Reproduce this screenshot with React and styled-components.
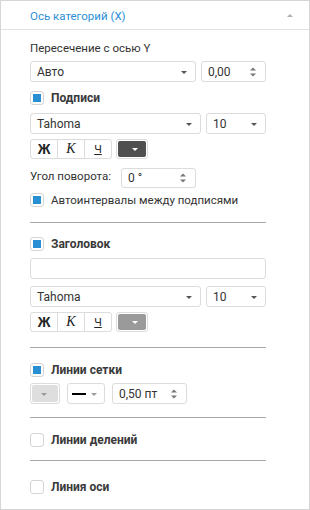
import React from 'react';
import styled, { createGlobalStyle } from 'styled-components';

const GlobalStyle = createGlobalStyle`
  html, body {
    margin: 0;
    padding: 0;
    background: #ffffff;
  }
  body {
    font-family: Roboto, "Noto Sans", sans-serif;
    font-size: 12px;
    color: #333333;
  }
`;

const Panel = styled.div`
  width: 308px;
  height: 508px;
  border: 1px solid #d6d6d6;
  background: #ffffff;
`;

const Header = styled.div`
  height: 28px;
  border-bottom: 1px solid #e2e2e2;
  display: flex;
  align-items: center;
  justify-content: space-between;
  padding: 0 16px 0 29px;
`;

const Title = styled.span`
  color: #2b8fd6;
  font-size: 11.5px;
  margin-top: 1px;
`;

const CollapseArrow = styled.span`
  width: 0;
  height: 0;
  border-left: 3px solid transparent;
  border-right: 3px solid transparent;
  border-bottom: 3px solid #b0b0b0;
`;

const Body = styled.div`
  padding: 0 43px 0 29px;
  display: flex;
  flex-direction: column;
`;

const Label = styled.div`
  margin-top: ${(p) => p.$mt || 0}px;
  line-height: 16px;
  font-size: 11.5px;
`;

const Row = styled.div`
  display: flex;
  align-items: ${(p) => p.$align || 'center'};
  gap: ${(p) => p.$gap ?? 5}px;
  margin-top: ${(p) => p.$mt || 0}px;
`;

const Box = styled.div`
  position: relative;
  box-sizing: border-box;
  width: ${(p) => (p.$w ? `${p.$w}px` : 'auto')};
  flex: ${(p) => (p.$w ? 'none' : '1')};
  height: ${(p) => p.$h || 21}px;
  border: 1px solid #dcdcdc;
  border-radius: 3px;
  background: #ffffff;
  display: flex;
  align-items: center;
  padding: 0 0 0 ${(p) => p.$pl ?? 6}px;
  font-size: 12px;
  color: #333333;
`;

const Caret = styled.span`
  position: absolute;
  right: ${(p) => p.$right ?? 8}px;
  top: 50%;
  margin-top: -1px;
  width: 0;
  height: 0;
  border-left: 3px solid transparent;
  border-right: 3px solid transparent;
  border-top: 3px solid ${(p) => p.$color || '#555555'};
`;

const Spinner = styled.span`
  position: absolute;
  right: ${(p) => p.$right ?? 9}px;
  top: 50%;
  transform: translateY(-50%);
  display: flex;
  flex-direction: column;
  gap: 3px;

  &::before,
  &::after {
    content: '';
    width: 0;
    height: 0;
    border-left: 3px solid transparent;
    border-right: 3px solid transparent;
  }
  &::before {
    border-bottom: 3px solid #777777;
  }
  &::after {
    border-top: 3px solid #777777;
  }
`;

const CheckRow = styled.label`
  display: flex;
  align-items: center;
  gap: 7px;
  height: 16px;
  margin-top: ${(p) => p.$mt || 0}px;
  font-size: ${(p) => (p.$bold ? 12 : 11.5)}px;
  font-weight: ${(p) => (p.$bold ? 700 : 400)};
  color: ${(p) => (p.$bold ? '#3a3a3a' : '#333333')};
`;

const CheckBox = styled.span`
  box-sizing: border-box;
  width: 14px;
  height: 14px;
  border: 1px solid #d4d4d4;
  border-radius: 3px;
  background: #ffffff;
  display: flex;
  align-items: center;
  justify-content: center;

  &::after {
    content: '';
    display: ${(p) => (p.$checked ? 'block' : 'none')};
    width: 8px;
    height: 8px;
    background: #2a8ed3;
  }
`;

const Divider = styled.div`
  height: 1px;
  background: #a8a8a8;
  margin-top: ${(p) => p.$mt || 0}px;
`;

const StyleGroup = styled.div`
  display: flex;
  height: 20px;
  box-sizing: border-box;
  border: 1px solid #dcdcdc;
  border-radius: 3px;
`;

const StyleButton = styled.span`
  width: 26px;
  display: flex;
  align-items: center;
  justify-content: center;
  border-left: ${(p) => (p.$first ? 'none' : '1px solid #dcdcdc')};
  color: #222222;
  font-size: 13px;
`;

const BoldGlyph = styled(StyleButton)`
  font-family: "Liberation Sans", Arial, sans-serif;
  font-weight: 900;
  font-size: 14px;
`;

const ItalicGlyph = styled(StyleButton)`
  font-family: "Liberation Serif", "Times New Roman", serif;
  font-style: italic;
  font-size: 14px;
`;

const UnderGlyph = styled(StyleButton)`
  font-size: 11px;
  text-decoration: underline;
`;

const ColorButton = styled.div`
  position: relative;
  box-sizing: border-box;
  width: ${(p) => p.$w || 32}px;
  height: ${(p) => p.$h || 20}px;
  border: 1px solid #dcdcdc;
  border-radius: 3px;
  padding: 1px;
`;

const ColorFill = styled.div`
  width: 100%;
  height: 100%;
  border-radius: 2px;
  background: ${(p) => p.$color};
`;

const LineSample = styled.span`
  width: 14px;
  height: 2px;
  background: #000000;
`;

const FontRow = ({ mt }) => (
  <Row $mt={mt}>
    <Box>
      Tahoma
      <Caret />
    </Box>
    <Box $w={60}>
      10
      <Caret />
    </Box>
  </Row>
);

const StyleRow = ({ mt, color, caret }) => (
  <Row $mt={mt} $gap={4}>
    <StyleGroup>
      <BoldGlyph $first>Ж</BoldGlyph>
      <ItalicGlyph>К</ItalicGlyph>
      <UnderGlyph>Ч</UnderGlyph>
    </StyleGroup>
    <ColorButton>
      <ColorFill $color={color} />
      <Caret $right={9} $color={caret} />
    </ColorButton>
  </Row>
);

export default function App() {
  return (
    <>
      <GlobalStyle />
      <Panel>
        <Header>
          <Title>Ось категорий (X)</Title>
          <CollapseArrow />
        </Header>
        <Body>
          <Label $mt={10}>Пересечение с осью Y</Label>
          <Row $mt={5}>
            <Box>
              Авто
              <Caret />
            </Box>
            <Box $w={65}>
              0,00
              <Spinner $right={9} />
            </Box>
          </Row>

          <CheckRow $mt={8} $bold>
            <CheckBox $checked />
            Подписи
          </CheckRow>
          <FontRow mt={7} />
          <StyleRow mt={5} color="#4f4f4f" caret="#ffffff" />
          <Row $mt={9} $gap={10} $align="flex-start">
            <Label>Угол поворота:</Label>
            <Box $w={75} $h={20}>
              0 °
              <Spinner $right={9} />
            </Box>
          </Row>
          <CheckRow $mt={4}>
            <CheckBox $checked />
            Автоинтервалы между подписями
          </CheckRow>

          <Divider $mt={14} />

          <CheckRow $mt={13} $bold>
            <CheckBox $checked />
            Заголовок
          </CheckRow>
          <Row $mt={6}>
            <Box />
          </Row>
          <FontRow mt={7} />
          <StyleRow mt={5} color="#9a9a9a" caret="#ffffff" />

          <Divider $mt={15} />

          <CheckRow $mt={14} $bold>
            <CheckBox $checked />
            Линии сетки
          </CheckRow>
          <Row $mt={5} $gap={7}>
            <ColorButton $w={30} $h={21}>
              <ColorFill $color="#dedede" />
              <Caret $right={12} $color="#9a9a9a" />
            </ColorButton>
            <Box $w={38} $pl={4}>
              <LineSample />
              <Caret $right={7} $color="#9a9a9a" />
            </Box>
            <Box $w={75}>
              0,50 пт
              <Spinner $right={9} />
            </Box>
          </Row>

          <Divider $mt={13} />

          <CheckRow $mt={14} $bold>
            <CheckBox />
            Линии делений
          </CheckRow>

          <Divider $mt={12} />

          <CheckRow $mt={18} $bold>
            <CheckBox />
            Линия оси
          </CheckRow>
        </Body>
      </Panel>
    </>
  );
}
